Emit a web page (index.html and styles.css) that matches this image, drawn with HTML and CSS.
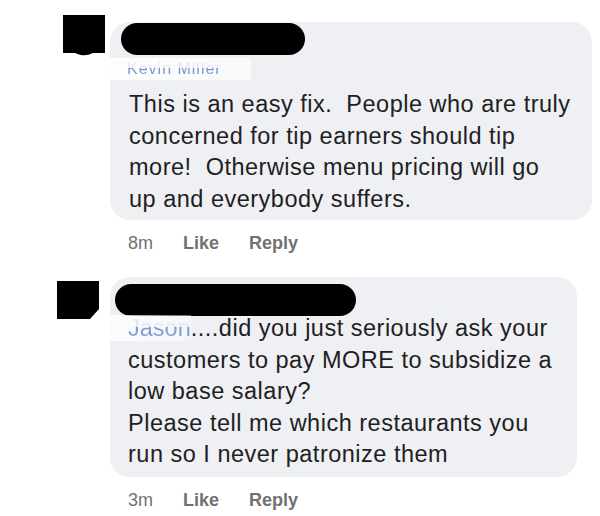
FILE: index.html
```html
<!DOCTYPE html>
<html lang="en">
<head>
  <meta charset="UTF-8">
  <title>Comments</title>
  <link rel="stylesheet" href="styles.css">
</head>
<body>
  <div class="thread">

    <div class="comment comment-one">
      <div class="avatar">
        <svg width="42" height="41" viewBox="0 0 42 41">
          <path d="M0 0H42V38H30Q24 41 18 40Q14 39 12 38H0Z" fill="#000"/>
        </svg>
      </div>
      <div class="body">
        <div class="bubble">
          <div class="redact"></div>
          <div class="author"><span class="smudge">Kevin Miller</span></div>
          <p class="text">This is an easy fix.&nbsp; People who are truly<br>concerned for tip earners should tip<br>more!&nbsp; Otherwise menu pricing will go<br>up and everybody suffers.</p>
        </div>
        <div class="actions">
          <span class="time">8m</span>
          <a class="link">Like</a>
          <a class="link">Reply</a>
        </div>
      </div>
    </div>

    <div class="comment comment-two">
      <div class="avatar">
        <svg width="42" height="38" viewBox="0 0 42 38">
          <path d="M0 0H42V28L33 38H0Z" fill="#000"/>
        </svg>
      </div>
      <div class="body">
        <div class="bubble">
          <div class="redact"></div>
          <p class="text"><span class="tag"><span class="smudge">Jason</span></span>....did you just seriously ask your<br>customers to pay MORE to subsidize a<br>low base salary?<br>Please tell me which restaurants you<br>run so I never patronize them</p>
        </div>
        <div class="actions">
          <span class="time">3m</span>
          <a class="link">Like</a>
          <a class="link">Reply</a>
        </div>
      </div>
    </div>

  </div>
</body>
</html>
```

FILE: styles.css
```css
body {
  margin: 0;
  background-color: #fff;
  font-family: "Liberation Sans", Arial, sans-serif;
  color: #1f2023;
}

.thread {
  display: flex;
  flex-direction: column;
  padding-top: 15px;
}

.comment {
  display: flex;
  align-items: flex-start;
}

.avatar svg {
  display: block;
}

/* first comment */
.comment-one {
  padding-left: 63px;
}

.comment-one .body {
  margin-left: 5px;
  padding-top: 7px;
}

.comment-one .bubble {
  width: 482px;
  padding: 1px 0 5px 11px;
}

.comment-one .redact {
  width: 184px;
}

.comment-one .text {
  margin-top: 9px;
}

/* second comment */
.comment-two {
  padding-left: 57px;
  margin-top: 22px;
}

.comment-two .avatar {
  margin-top: 4px;
}

.comment-two .body {
  margin-left: 11px;
}

.comment-two .bubble {
  width: 467px;
  padding: 7px 0 6px 5px;
}

.comment-two .redact {
  width: 241px;
  margin-bottom: -3px;
}

.bubble {
  box-sizing: border-box;
  background-color: #eff0f3;
  border-radius: 20px;
}

.redact {
  height: 32px;
  background-color: #000;
  border-radius: 16px;
}

.author {
  margin: 3px 0 0 -11px;
  padding: 2px 0 2px 17px;
  width: 124px;
  height: 18px;
  background: linear-gradient(to right, rgba(255, 255, 255, 0.9), rgba(255, 255, 255, 0.6));
  font-size: 16px;
  line-height: 18px;
}

.smudge {
  color: transparent;
  background: linear-gradient(to bottom, #e4e7ee 50%, #7096d2 50%);
  -webkit-background-clip: text;
  background-clip: text;
  letter-spacing: 1px;
}

.tag {
  margin-left: -23px;
  padding: 0 0 0 23px;
  background: linear-gradient(to right, rgba(255, 255, 255, 0.85), rgba(255, 255, 255, 0.4));
}

.text {
  margin: 0;
  padding-left: 8px;
  font-size: 23.5px;
  line-height: 31.5px;
  letter-spacing: 0.5px;
}

.comment-two .text {
  padding-left: 13px;
}

.comment-two .tag .smudge {
  background: linear-gradient(to bottom, #e4e7ee 45%, #7d9fd6 45%);
  -webkit-background-clip: text;
  background-clip: text;
  letter-spacing: 0;
}

.actions {
  display: flex;
  gap: 30px;
  margin-top: 11px;
  padding-left: 18px;
  font-size: 18px;
  line-height: 24px;
  color: #707174;
}

.link {
  font-weight: bold;
  cursor: pointer;
}
```
